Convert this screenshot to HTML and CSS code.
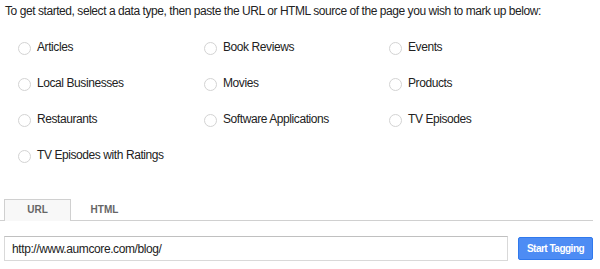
FILE: index.html
```html
<!DOCTYPE html>
<html lang="en">
<head>
    <meta charset="UTF-8">
    <title>Structured Data Markup Helper</title>
    <link rel="stylesheet" href="styles.css">
</head>
<body>
    <p class="intro">To get started, select a data type, then paste the URL or HTML source of the page you wish to mark up below:</p>

    <div class="types">
        <label class="type"><span class="radio"></span>Articles</label>
        <label class="type"><span class="radio"></span>Book Reviews</label>
        <label class="type"><span class="radio"></span>Events</label>
        <label class="type"><span class="radio"></span>Local Businesses</label>
        <label class="type"><span class="radio"></span>Movies</label>
        <label class="type"><span class="radio"></span>Products</label>
        <label class="type"><span class="radio"></span>Restaurants</label>
        <label class="type"><span class="radio"></span>Software Applications</label>
        <label class="type"><span class="radio"></span>TV Episodes</label>
        <label class="type"><span class="radio"></span>TV Episodes with Ratings</label>
    </div>

    <div class="tabs">
        <div class="tab is-active">URL</div>
        <div class="tab">HTML</div>
    </div>

    <div class="url-row">
        <input class="url" type="text" value="http://www.aumcore.com/blog/">
        <button class="start">Start Tagging</button>
    </div>
</body>
</html>
```

FILE: styles.css
```css
body {
    margin: 0;
    width: 600px;
    font-family: "Liberation Sans", Arial, sans-serif;
    font-size: 12px;
    color: #222;
    background: #fff;
}

.intro {
    margin: 0;
    padding: 4px 0 0 5px;
    line-height: 14px;
    letter-spacing: -0.44px;
}

.types {
    display: grid;
    grid-template-columns: 186px 185px 185px;
    grid-auto-rows: 36px;
    margin: 11px 0 0 18px;
}

.type {
    display: flex;
    align-items: center;
    letter-spacing: -0.42px;
    cursor: pointer;
}

.radio {
    box-sizing: border-box;
    width: 13px;
    height: 13px;
    margin: 3px 6px 0 0;
    border: 1px solid #d3d3d3;
    border-radius: 50%;
    background: #fff;
}

.tabs {
    display: flex;
    margin: 26px 7px 0 0;
    padding-left: 4px;
    border-bottom: 1px solid #d0d0d0;
    height: 21px;
}

.tab {
    box-sizing: border-box;
    width: 67px;
    height: 22px;
    line-height: 20px;
    text-align: center;
    font-size: 10px;
    font-weight: bold;
    color: #666;
    border: 1px solid transparent;
    border-bottom: none;
}

.tab.is-active {
    background: #f8f8f8;
    border-color: #d0d0d0;
}

.url-row {
    display: flex;
    align-items: center;
    margin: 15px 0 0 4px;
}

.url {
    box-sizing: border-box;
    width: 504px;
    height: 25px;
    padding: 0 7px;
    border: 1px solid #d9d9d9;
    border-top-color: #c0c0c0;
    font-family: "Liberation Sans", Arial, sans-serif;
    font-size: 12px;
    letter-spacing: -0.4px;
    color: #222;
    outline: none;
}

.start {
    box-sizing: border-box;
    width: 75px;
    height: 23px;
    margin-left: 10px;
    padding: 0;
    border: 1px solid #3079ed;
    border-radius: 2px;
    background: #4d8cf4;
    color: #fff;
    font-family: "Liberation Sans", Arial, sans-serif;
    font-size: 10px;
    font-weight: bold;
    letter-spacing: -0.5px;
}
```
